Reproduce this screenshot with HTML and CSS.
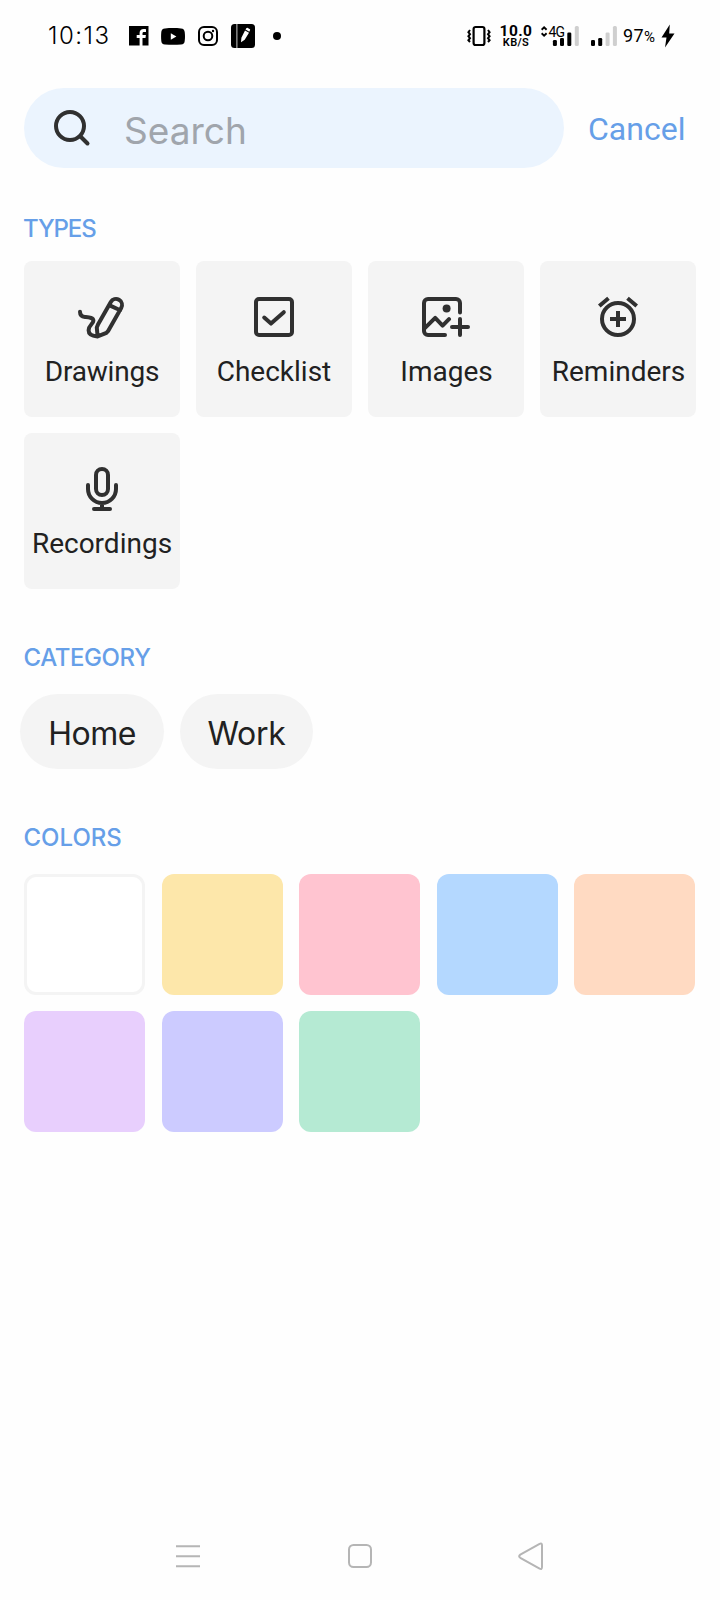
FILE: index.html
```html
<!DOCTYPE html>
<html lang="en">
<head>
<meta charset="utf-8">
<title>Search notes</title>
<link rel="stylesheet" href="styles.css">
</head>
<body>
<div class="screen">
  <header class="status">
    <span class="clock">10:13</span>
    <svg class="st-fb" width="20" height="20" viewBox="0 0 20 20"><path fill="#000" d="M0 0h19.5v19.5h-6V12h3l.4-3h-3.4V7.4c0-1 .4-1.5 1.6-1.5H17V3.200c-.5-.1-1.300-.1-2.300-.1-2.500 0-4.100 1.400-4.100 4V9H7.700v3h2.900v7.500H0z"/></svg>
    <svg class="st-yt" width="24" height="17" viewBox="0 0 24 17"><path fill="#000" fill-rule="evenodd" d="M4 .4C9 0 15 0 20 .4c2.500.2 3.500 1.400 3.700 3.600.4 3 .4 6 0 9-.2 2.200-1.200 3.300-3.700 3.500-5 .4-11 .4-16 0C1.500 16.300.500 15.200.3 13 0 10 0 7 .3 4 .5 1.800 1.500.6 4 .4zM9.800 5.200v6.600l5.600-3.300z"/></svg>
    <svg class="st-ig" width="20" height="20" viewBox="0 0 20 20" fill="none" stroke="#000" stroke-width="2"><rect x="1" y="1" width="18" height="18" rx="5"/><circle cx="10" cy="10" r="4.300"/><circle cx="15" cy="5" r="1.200" fill="#000" stroke="none"/></svg>
    <svg class="st-note" width="24" height="24" viewBox="0 0 24 24"><rect width="24" height="24" rx="3.500"/><path d="M5.900 0v24" stroke="#fff" stroke-width=".8"/><path fill="#fff" d="M10 18.300l.4-4.600 3.600-7.200 4 2.200-4.300 7.100zM14.500 5.600l.8-1.300c.4-.6.900-.7 1.500-.4l1.800 1c.6.3.7.9.4 1.400l-.7 1.500z"/></svg>
    <span class="dot"></span>
    <svg class="st-vib" width="24" height="22" viewBox="0 0 24 22" fill="none" stroke="#000"><rect x="6.600" y="2" width="10.800" height="18" rx="2" stroke-width="2.200"/><path stroke-width="2" d="M3 5L1.400 7.200l1.600 2-1.600 2 1.600 2-1.600 2L3 17M21 5l1.600 2.200-1.600 2 1.600 2-1.600 2 1.600 2L21 17"/></svg>
    <span class="speed"><b class="rate">10.0</b><b class="unit">KB/S</b></span>
    <svg class="st-sig" width="39" height="22" viewBox="0 0 39 22"><path fill="none" stroke="#000" stroke-width="1.900" d="M.6 4.700L3.100 2.300l2.500 2.400M.6 8.300l2.500 2.400 2.500-2.400"/><text class="net" x="7.500" y="12">4G</text><rect x="11.900" y="15" width="4" height="6" rx="1.300"/><rect x="19" y="13" width="4" height="8" rx="1.300"/><rect x="26.300" y="7.500" width="4" height="13.500" rx="1.300"/><rect x="33.800" y="1" width="4" height="20" rx="1.500" fill="#cfcfcf"/></svg>
    <svg class="st-sig2" width="27" height="22" viewBox="0 0 27 22"><rect x=".0" y="15" width="4" height="6" rx="1.300"/><rect x="7.200" y="13" width="4" height="8" rx="1.300"/><rect x="14.600" y="7.500" width="4" height="13.500" rx="1.300" fill="#cfcfcf"/><rect x="21.900" y="1" width="4" height="20" rx="1.500" fill="#cfcfcf"/></svg>
    <span class="battery">97<span class="pct">%</span></span>
    <svg class="st-bolt" width="14" height="24" viewBox="0 0 14 24"><path d="M8.800.5L.5 13.500h5L4 23.500 13.500 9.500H8.200z"/></svg>
  </header>

  <div class="searchrow">
    <div class="search">
      <svg class="lens" width="38" height="38" viewBox="0 0 38 38" fill="none" stroke="#303030" stroke-width="4" stroke-linecap="round"><circle cx="17" cy="17" r="14"/><path d="M27.500 27.500l7 7"/></svg>
      <span class="placeholder">Search</span>
    </div>
    <span class="cancel">Cancel</span>
  </div>

  <h2 class="heading h-types">TYPES</h2>
  <div class="types">
    <div class="tile">
      <svg class="icon" viewBox="0 0 24 24"><path d="M1 9.400c0 1.700.7 2.400 2.500 2.600 2 .2 4.200.3 4.200 1.900 0 1.500-2.400 2.200-2.400 4.700 0 2.300 1.900 2.900 4.400 3.100M9.800 21.700l-.4-4.400.6-1.500L16.400 4.500a3 3 0 0 1 5.200 3L15 19.100l-.8.800-4.400 1.800M16.100 6.300l5 2.300"/></svg>
      <span class="label drawings">Drawings</span>
    </div>
    <div class="tile">
      <svg class="icon" viewBox="0 0 24 24"><rect x="3" y="3" width="18" height="18" rx="1.500"/><path d="M7.100 12.300l3.400 3 6.400-5.700"/></svg>
      <span class="label">Checklist</span>
    </div>
    <div class="tile">
      <svg class="icon" viewBox="0 0 24 24"><path d="M19 9.800V5a2 2 0 0 0-2-2H3a2 2 0 0 0-2 2v14a2 2 0 0 0 2 2h8.500M1.400 17.600l5.200-5.200 3.700 3.900 3.200-3.200M15 17h8M19 13v8"/><circle class="solid" cx="12.300" cy="7.700" r="2"/></svg>
      <span class="label images">Images</span>
    </div>
    <div class="tile">
      <svg class="icon" viewBox="0 0 24 24"><circle cx="12" cy="13" r="8"/><path class="solid" d="M22 5.720l-4.600-3.860-1.290 1.530 4.600 3.860zM7.880 3.390L6.600 1.860 2 5.710l1.290 1.530zM13 9h-2v3H8v2h3v3h2v-3h3v-2h-3z"/></svg>
      <span class="label reminders">Reminders</span>
    </div>
    <div class="tile">
      <svg class="icon" viewBox="0 0 24 24"><rect x="9" y="2" width="6" height="13" rx="3"/><path d="M5 10v2a7 7 0 0 0 14 0v-2M12 19v3M8 22h8"/></svg>
      <span class="label">Recordings</span>
    </div>
  </div>

  <h2 class="heading h-category">CATEGORY</h2>
  <div class="chips"><span class="chip home">Home</span><span class="chip work">Work</span></div>

  <h2 class="heading h-colors">COLORS</h2>
  <div class="colors">
    <div class="swatch white"></div>
    <div class="swatch yellow"></div>
    <div class="swatch pink"></div>
    <div class="swatch blue"></div>
    <div class="swatch peach"></div>
    <div class="swatch lilac"></div>
    <div class="swatch violet"></div>
    <div class="swatch mint"></div>
  </div>

  <nav class="nav">
    <svg width="28" height="28" viewBox="0 0 28 28"><path d="M2 4.200h24M2 14.200h24M2 24.200h24"/></svg>
    <svg width="28" height="28" viewBox="0 0 28 28"><rect x="3" y="3" width="22" height="22" rx="4.500"/></svg>
    <svg width="28" height="28" viewBox="0 0 28 28"><path d="M2.300 12.600L21.600 1.800q2.400-1.200 2.400 1.500v21.800q0 2.700-2.400 1.500L2.300 15.800q-2.300-1.600 0-3.200z"/></svg>
  </nav>
</div>
</body>
</html>
```

FILE: styles.css
```css
* { box-sizing: border-box; }
body { margin: 0; background: #fefefe; }
.screen {
  width: 720px;
  height: 1600px;
  display: flex;
  flex-direction: column;
  overflow: hidden;
  font-family: Inter, "Liberation Sans", sans-serif;
  color: #212121;
}
svg { display: block; flex: none; }

/* Status bar */
.status {
  height: 72px;
  flex: none;
  display: flex;
  align-items: center;
  padding-left: 47px;
  color: #000;
}
.clock { width: 82px; padding-left: 1px; font-size: 24px; font-weight: 300; line-height: 28px; letter-spacing: 1.500px; white-space: nowrap; }
.st-yt { margin-left: 12px; }
.st-ig { margin-left: 13px; }
.st-note { margin-left: 13px; }
.dot { width: 8px; height: 8px; margin-left: 18px; border-radius: 50%; background: #000; }
.st-vib { margin-left: 186px; }
.speed {
  width: 34px;
  margin-left: 8px;
  padding-top: 2px;
  display: flex;
  flex-direction: column;
  align-items: center;
  font-family: Roboto, sans-serif;
}
.rate { font-size: 15.500px; line-height: 12px; font-weight: 700; letter-spacing: .4px; }
.unit { font-size: 11px; line-height: 12px; font-weight: 600; letter-spacing: .4px; }
.st-sig { margin-left: 8px; }
.net { font: 400 14px Roboto, sans-serif; letter-spacing: -.9px; }
.st-sig2 { margin-left: 11px; }
.battery { width: 43px; padding-left: 5px; font: 400 18px/22px Roboto, sans-serif; letter-spacing: .4px; white-space: nowrap; }
.pct { font-size: 15px; }

/* Search */
.searchrow { display: flex; align-items: center; height: 80px; margin-top: 16px; padding-left: 24px; flex: none; }
.search { width: 540px; height: 80px; border-radius: 40px; background: #ebf4fe; display: flex; align-items: center; padding-left: 29px; }
.placeholder { margin-left: 33px; padding-top: 6px; font-size: 37px; line-height: 46px; font-weight: 400; color: #a0a5ac; }
.cancel { margin-left: 24px; padding-top: 2px; font: 400 32px/38px Roboto, sans-serif; color: #669fe8; }

/* Sections */
.heading { margin: 0 0 0 24px; font-size: 24px; line-height: 30px; font-weight: 500; color: #669fe8; flex: none; width: max-content; }
.h-types { margin-top: 46px; margin-left: 23px; letter-spacing: -1.100px; }
.types { display: grid; grid-template-columns: repeat(4, 156px); gap: 16px; padding-left: 24px; margin-top: 17px; }
.tile { height: 156px; border-radius: 8px; background: #f4f4f4; padding-top: 32px; display: flex; flex-direction: column; align-items: center; }
.icon { width: 48px; height: 48px; fill: none; stroke: #303030; stroke-width: 2; stroke-linecap: round; stroke-linejoin: round; }
.solid { fill: #303030; stroke: none; }
.label { margin-top: 14px; font: 400 28px/34px Roboto, sans-serif; white-space: nowrap; }
.drawings { letter-spacing: -.2px; }
.images, .reminders { padding-left: 1px; }

.h-category { margin-top: 54px; letter-spacing: -.4px; margin-left: 23.500px; }
.chips { display: flex; gap: 16px; padding-left: 20px; margin-top: 21px; }
.chip { height: 75px; border-radius: 38px; background: #f4f4f4; font-size: 32px; font-weight: 400; line-height: 79px; text-align: center; }
.home { width: 144px; letter-spacing: -.5px; }
.work { width: 133px; letter-spacing: -.3px; }

.h-colors { margin-top: 54px; margin-left: 23.500px; }
.colors { display: grid; grid-template-columns: repeat(5, 121px); gap: 16px 16.500px; padding-left: 24px; margin-top: 21px; }
.swatch { height: 121px; border-radius: 12px; }
.white { border: 3px solid #f4f4f4; background: #fff; }
.yellow { background: #fde7aa; }
.pink { background: #ffc4d0; }
.blue { background: #b4d8ff; }
.peach { background: #ffdac2; }
.lilac { background: #e8cffd; }
.violet { background: #cccbff; }
.mint { background: #b5ead3; }

/* System navigation */
.nav { margin-top: auto; height: 88px; padding: 0 174px; display: flex; align-items: center; justify-content: space-between; }
.nav svg { fill: none; stroke: #b5b5b5; stroke-width: 2; }
```
